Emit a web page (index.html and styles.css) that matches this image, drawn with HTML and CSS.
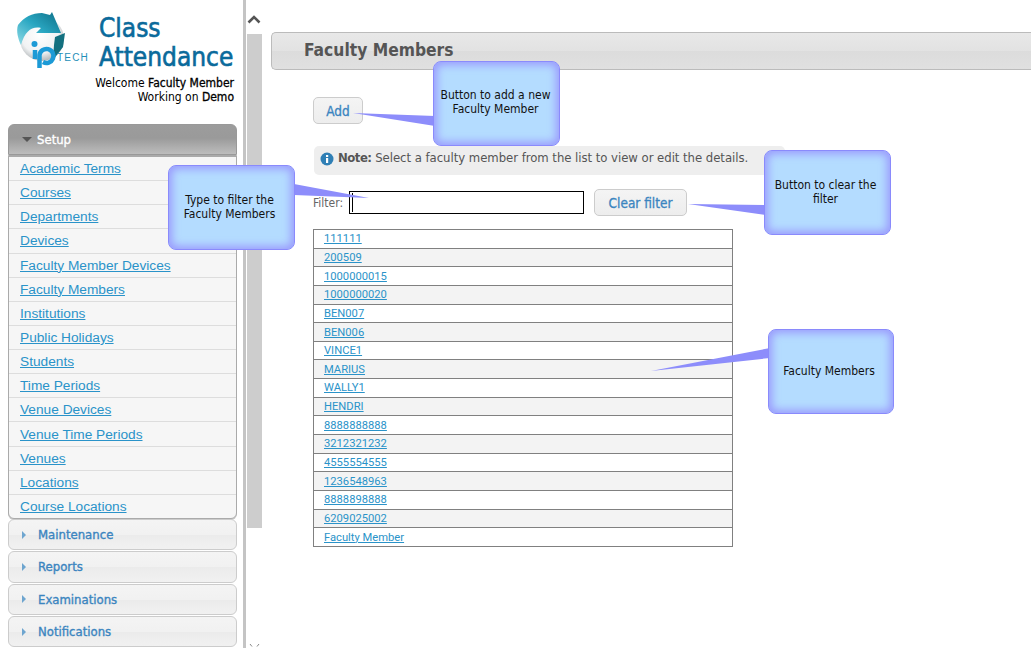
FILE: index.html
```html
<!DOCTYPE html>
<html lang="en">
<head>
<meta charset="utf-8">
<title>Faculty Members</title>
<link rel="stylesheet" href="styles.css">
</head>
<body>
<div class="page">
  <aside class="sidebar">
    <header class="brand">
      <div class="brand-top">
        <svg class="logo" width="79" height="66" viewBox="0 0 79 66">
          <defs>
            <radialGradient id="sph" cx="0.45" cy="0.4" r="0.65"><stop offset="0" stop-color="#fff"/><stop offset="0.65" stop-color="#f0f2f3"/><stop offset="1" stop-color="#a4a9ac"/></radialGradient>
            <linearGradient id="arr" x1="0" y1="1" x2="1" y2="0"><stop offset="0" stop-color="#8fdbe6"/><stop offset="0.5" stop-color="#2aa7c2"/><stop offset="1" stop-color="#0d6e86"/></linearGradient>
          </defs>
          <circle cx="30" cy="30" r="22" fill="url(#sph)"/>
          <path d="M6 16C12 8 20 4 30 4L38 6L40 3L49 24L24 24L29 19C20 17 13 22 9 36C6 30 4 22 6 16Z" fill="url(#arr)"/>
          <path d="M43 28L53 24L51 38L41 51L42 36Z" fill="#13707f"/>
          <circle cx="22.500" cy="35" r="3" fill="#1c9ad6"/>
          <path d="M23 41v9" stroke="#1c9ad6" stroke-width="4.500"/>
          <path d="M27.500 59V46a7 7 0 1 1 3.500 7" fill="none" stroke="#1c9ad6" stroke-width="4.500"/>
          <text class="logo-tech" x="45" y="52">TECH</text>
        </svg>
        <h1 class="app-title">Class<br>Attendance</h1>
      </div>
      <p class="welcome">Welcome <b>Faculty Member</b><br>Working on <b>Demo</b></p>
    </header>
    <nav class="accordion">
      <h3 class="acc-head acc-open"><span class="tri-down"></span>Setup</h3>
      <ul class="acc-body">
        <li><a href="#">Academic Terms</a></li>
        <li><a href="#">Courses</a></li>
        <li><a href="#">Departments</a></li>
        <li><a href="#">Devices</a></li>
        <li><a href="#">Faculty Member Devices</a></li>
        <li><a href="#">Faculty Members</a></li>
        <li><a href="#">Institutions</a></li>
        <li><a href="#">Public Holidays</a></li>
        <li><a href="#">Students</a></li>
        <li><a href="#">Time Periods</a></li>
        <li><a href="#">Venue Devices</a></li>
        <li><a href="#">Venue Time Periods</a></li>
        <li><a href="#">Venues</a></li>
        <li><a href="#">Locations</a></li>
        <li><a href="#">Course Locations</a></li>
      </ul>
      <h3 class="acc-head"><span class="tri-right"></span>Maintenance</h3>
      <h3 class="acc-head"><span class="tri-right"></span>Reports</h3>
      <h3 class="acc-head"><span class="tri-right"></span>Examinations</h3>
      <h3 class="acc-head"><span class="tri-right"></span>Notifications</h3>
    </nav>
  </aside>
  <div class="scrollbar">
    <svg class="sb-arrow" width="15" height="12" viewBox="0 0 15 12"><path d="M1.500 9.500L7 4L12.500 9.500" fill="none" stroke="#555" stroke-width="2.600"/></svg>
    <div class="sb-thumb"></div>
    <svg class="sb-arrow-down" width="15" height="6" viewBox="0 0 15 6"><path d="M3 2L5 4.500M12 2L10 4.500" fill="none" stroke="#888" stroke-width="1"/></svg>
  </div>
  <main class="main">
    <h2 class="page-title">Faculty Members</h2>
    <div class="content">
      <button class="btn btn-add" type="button">Add</button>
      <p class="note"><svg class="info" width="14" height="14" viewBox="0 0 14 14"><circle cx="7" cy="7" r="6.500" fill="#2f7fb5"/><rect x="6" y="6" width="2.200" height="5" fill="#fff"/><rect x="6" y="3" width="2.200" height="2" fill="#fff"/></svg><span><b>Note:</b> Select a faculty member from the list to view or edit the details.</span></p>
      <div class="filter-row">
        <label class="filter-label" for="flt">Filter:</label>
        <input class="filter-input" id="flt" type="text">
        <button class="btn btn-clear" type="button">Clear filter</button>
      </div>
      <table class="list">
        <tr><td><a href="#">111111</a></td></tr>
        <tr><td><a href="#">200509</a></td></tr>
        <tr><td><a href="#">1000000015</a></td></tr>
        <tr><td><a href="#">1000000020</a></td></tr>
        <tr><td><a href="#">BEN007</a></td></tr>
        <tr><td><a href="#">BEN006</a></td></tr>
        <tr><td><a href="#">VINCE1</a></td></tr>
        <tr><td><a href="#">MARIUS</a></td></tr>
        <tr><td><a href="#">WALLY1</a></td></tr>
        <tr><td><a href="#">HENDRI</a></td></tr>
        <tr><td><a href="#">8888888888</a></td></tr>
        <tr><td><a href="#">3212321232</a></td></tr>
        <tr><td><a href="#">4555554555</a></td></tr>
        <tr><td><a href="#">1236548963</a></td></tr>
        <tr><td><a href="#">8888898888</a></td></tr>
        <tr><td><a href="#">6209025002</a></td></tr>
        <tr><td><a href="#">Faculty Member</a></td></tr>
      </table>
    </div>
  </main>
</div>

<svg class="tails" width="1031" height="648" viewBox="0 0 1031 648">
  <path d="M435 116L353 113L435 126Z"/>
  <path d="M294 184L369 198L294 195Z"/>
  <path d="M766 205L688 204L766 215Z"/>
  <path d="M770 348L651 371L770 358Z"/>
</svg>
<div class="callout c-add">Button to add a new<br>Faculty Member</div>
<div class="callout c-type">Type to filter the<br>Faculty Members</div>
<div class="callout c-clear">Button to clear the<br>filter</div>
<div class="callout c-list">Faculty Members</div>
</body>
</html>
```
FILE: styles.css
```css
* { box-sizing: border-box; }
html, body { margin: 0; padding: 0; height: 100%; overflow: hidden; background: #fff; }
body { font-family: "DejaVu Sans Condensed", "DejaVu Sans", sans-serif; font-stretch: condensed; position: relative; }
.page { display: flex; height: 648px; width: 1031px; overflow: hidden; }

.sidebar { width: 243px; flex: none; padding: 0 6px 0 8px; }
.brand { height: 124px; display: flex; flex-direction: column; }
.brand-top { display: flex; height: 76px; }
.logo { flex: none; margin: 9px 0 0 4px; }
.logo-tech { font: 10px "Liberation Sans", sans-serif; letter-spacing: 1.200px; fill: #1f8fb8; }
.app-title { margin: 14px 0 0 8px; font-size: 26px; line-height: 28.500px; font-weight: 400; color: #0a6a9b; -webkit-text-stroke: 0.6px #0a6a9b; }
.welcome { margin: 0; padding-right: 3px; text-align: right; font-size: 12px; line-height: 14px; color: #000; }
.welcome b { font-weight: 400; -webkit-text-stroke: 0.3px #000; }

.accordion { display: flex; flex-direction: column; }
.acc-head { margin: 0 0 1px; height: 31.300px; display: flex; align-items: center; padding-left: 13px; font-size: 13px; font-weight: 400; -webkit-text-stroke: 0.35px #3b85c0; color: #3b85c0; border: 1px solid #ccc; border-radius: 6px; background: linear-gradient(#f4f4f4, #f1f1f1 50%, #ebebeb 51%, #f1f1f1); }
.acc-open { margin: 0; height: 31px; color: #fff; -webkit-text-stroke: 0.35px #fff; border-color: #999; border-radius: 6px 6px 0 0; background: linear-gradient(#9c9c9c, #9a9a9a 45%, #bdbdbd); }
.tri-down { width: 0; height: 0; margin: 0 5px 0 0; border: 5px solid transparent; border-top: 5px solid #555; border-bottom: 0; }
.tri-right { width: 0; height: 0; margin: 0 12px 0 0; border: 4px solid transparent; border-left: 4px solid #6ea5cf; border-right: 0; }
.acc-body { list-style: none; margin: 0; padding: 0; height: 364px; display: grid; grid-auto-rows: 1fr; border: 1px solid #aaa; border-radius: 0 0 6px 6px; background: #f6f6f6; box-shadow: 0 1px 0 #ccc; }
.acc-body li { display: flex; align-items: center; padding-left: 11px; border-top: 1px solid #ddd; }
.acc-body li:first-child { border-top: 1px solid #aaa; }
.acc-body a { font: 13.700px "Liberation Sans", sans-serif; color: #2a93c9; }

.scrollbar { width: 20px; flex: none; border-left: 3px solid #c4c4c4; padding: 0 0 0 1px; position: relative; display: flex; flex-direction: column; }
.sb-arrow { flex: none; margin-top: 13px; margin-bottom: 9px; }
.sb-thumb { width: 15px; height: 494px; flex: none; background: #cdcdcd; }
.sb-arrow-down { margin-top: auto; }

.main { flex: 1; min-width: 0; padding: 32px 0 0 8px; }
.page-title { margin: 0; height: 38px; padding-left: 32px; line-height: 34px; font-size: 17.300px; font-weight: 700; color: #555; border: 1px solid #bbb; border-right: 0; border-radius: 5px 0 0 5px; background: linear-gradient(#e8e8e8, #e2e2e2 50%, #dcdcdc 51%, #e0e0e0); width: calc(100% + 8px); }
.content { padding: 27px 0 0 42px; }
.btn { display: block; font-family: inherit; font-stretch: condensed; font-size: 13.500px; font-weight: 400; -webkit-text-stroke: 0.3px #3b85c0; color: #3b85c0; border: 1px solid #ccc; border-radius: 5px; background: linear-gradient(#f4f4f4, #ededed); padding: 0; height: 27px; }
.btn-add { width: 50px; }
.note { margin: 22px 0 0 1px; width: 471px; height: 29px; display: flex; align-items: center; gap: 4px; padding: 0 0 6px 6px; font-size: 13px; letter-spacing: -0.04px; color: #555; background: #eee; border-radius: 5px; }
.note b { font-weight: 700; letter-spacing: -0.5px; }
.info { flex: none; margin-top: 2px; }
.filter-row { display: flex; align-items: center; margin-top: 14px; height: 27px; }
.filter-label { font-size: 12px; color: #666; width: 36px; padding-top: 1px; }
.filter-input { width: 235px; height: 23px; border: 1px solid #000; padding: 0; background: linear-gradient(#000, #000) 2px 1px / 1px 19px no-repeat #fff; outline: 0; }
.btn-clear { width: 93px; margin-left: 10px; }

.list { margin-top: 13px; width: 420px; height: 318px; border-collapse: collapse; border: 1px solid #808080; font: 11.200px Roboto, sans-serif; }
.list td { border: 1px solid #808080; padding: 1px 0 0 10px; line-height: 14px; }
.list tr:nth-child(even) td { background: #f3f3f3; }
.list a { color: #2a93c9; }

.tails { position: absolute; left: 0; top: 0; pointer-events: none; }
.tails path { fill: #8d8dfb; }
.callout { position: absolute; display: flex; align-items: center; justify-content: center; text-align: center; width: 127px; height: 85px; padding: 0 4px 2px 0; font-size: 12px; line-height: 14px; color: #111; background: #b4dcff; border: 1px solid #8a8afc; border-radius: 8px; box-shadow: inset 0 0 9px 3px #9a9afd; }
.c-add { left: 433px; top: 61px; padding: 0 2px 4px 0; }
.c-type { left: 168px; top: 165px; }
.c-clear { left: 764px; top: 150px; }
.c-list { left: 768px; top: 329px; width: 126px; }
```
